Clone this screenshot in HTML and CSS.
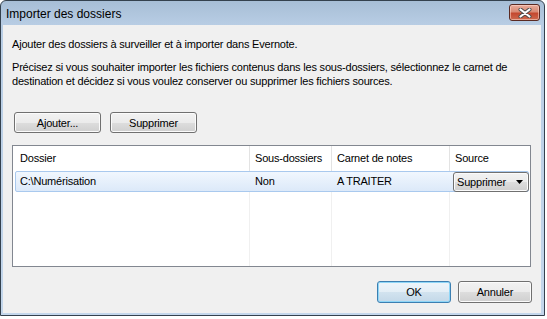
FILE: index.html
```html
<!DOCTYPE html>
<html lang="fr">
<head>
<meta charset="utf-8">
<title>Importer des dossiers</title>
<link rel="stylesheet" href="styles.css">
</head>
<body>
<div class="window">
  <div class="titlebar">
    <span class="title">Importer des dossiers</span>
    <button class="close" aria-label="Fermer">
      <svg width="14" height="10" viewBox="0 0 14 10">
        <path d="M2.5 1.5 L11.5 8.5 M11.5 1.5 L2.5 8.5" stroke="#4a4a4a" stroke-width="4" stroke-linecap="round" fill="none"/>
        <path d="M2.5 1.5 L11.5 8.5 M11.5 1.5 L2.5 8.5" stroke="#ffffff" stroke-width="2.2" stroke-linecap="round" fill="none"/>
      </svg>
    </button>
  </div>
  <div class="content">
    <p class="intro">Ajouter des dossiers à surveiller et à importer dans Evernote.</p>
    <p class="desc">Précisez si vous souhaiter importer les fichiers contenus dans les sous-dossiers, sélectionnez le carnet de<br>destination et décidez si vous voulez conserver ou supprimer les fichiers sources.</p>
    <div class="actions">
      <button class="btn btn-top">Ajouter...</button>
      <button class="btn btn-top">Supprimer</button>
    </div>
    <div class="list">
      <div class="hcell c1">Dossier</div>
      <div class="hcell c2">Sous-dossiers</div>
      <div class="hcell c3">Carnet de notes</div>
      <div class="hcell c4">Source</div>
      <div class="sel"></div>
      <div class="cell c1">C:\Numérisation</div>
      <div class="cell c2">Non</div>
      <div class="cell c3">A TRAITER</div>
      <div class="cell c4 combo-cell">
        <div class="combo">
          <span>Supprimer</span>
          <svg width="7" height="4" viewBox="0 0 7 4"><path d="M0 0 H7 L3.5 4 Z" fill="#000"/></svg>
        </div>
      </div>
      <div class="fill c1"></div>
      <div class="fill c2"></div>
      <div class="fill c3"></div>
      <div class="fill c4"></div>
    </div>
    <div class="footer">
      <button class="btn btn-foot btn-default">OK</button>
      <button class="btn btn-foot">Annuler</button>
    </div>
  </div>
</div>
</body>
</html>
```
FILE: styles.css
```css
* { box-sizing: border-box; }

body {
  margin: 0;
  background: #ffffff;
  font-family: "Liberation Sans", Arial, sans-serif;
  color: #000;
}

.window {
  width: 545px;
  height: 316px;
  border: 1px solid #34414e;
  border-radius: 6px 6px 0 0;
  background: linear-gradient(to bottom, #a7bed6 0px, #b8cde4 24px, #c3d6eb 100%);
  padding: 0 3px 2px 2px;
  display: flex;
  flex-direction: column;
}

.titlebar {
  height: 24px;
  display: flex;
  justify-content: space-between;
  align-items: flex-start;
  padding-left: 3px;
}

.title {
  font-size: 12px;
  line-height: 15px;
  padding-top: 6px;
  color: #000;
}

.close {
  margin-top: 3px;
  margin-right: 1px;
  width: 31px;
  height: 17px;
  padding: 0;
  border: 1px solid #5a2a22;
  border-radius: 3px;
  background: linear-gradient(to bottom, #e9ab9b 0%, #d88a74 45%, #c4482f 55%, #cd6a4f 100%);
  box-shadow: inset 0 0 0 1px rgba(255, 220, 210, 0.55);
  display: flex;
  align-items: center;
  justify-content: center;
}

.content {
  flex: 1;
  background: #f0f0f0;
  padding: 12px 0 0 9px;
  font-size: 11px;
  letter-spacing: -0.2px;
}

.intro, .desc {
  margin: 0;
  line-height: 14px;
}

.desc {
  margin-top: 9px;
}

.actions {
  margin-top: 24px;
  margin-left: 2px;
  display: flex;
  gap: 9px;
}

.btn {
  font-family: "Liberation Sans", Arial, sans-serif;
  font-size: 11px;
  letter-spacing: -0.2px;
  color: #000;
  height: 21px;
  padding: 0;
  border: 1px solid #707070;
  border-radius: 3px;
  background: linear-gradient(to bottom, #f2f2f2 0%, #ebebeb 50%, #dddddd 51%, #cfcfcf 100%);
  box-shadow: inset 0 0 0 1px #fbfbfb;
}

.btn-top { width: 87px; }

.list {
  margin-top: 12px;
  width: 519px;
  height: 122px;
  border: 1px solid #828790;
  background: #fff;
  display: grid;
  grid-template-columns: 237px 82px 118px 1fr;
  grid-template-rows: 25px 21px 1fr;
}

.c1 { grid-column: 1; }
.c2 { grid-column: 2; }
.c3 { grid-column: 3; }
.c4 { grid-column: 4; }

.hcell {
  grid-row: 1;
  border-right: 1px solid #e3e3e3;
  padding-left: 5px;
  line-height: 25px;
}

.hcell.c1, .cell.c1 { padding-left: 7px; }
.hcell.c4, .fill.c4 { border-right: none; }

.sel {
  grid-row: 2;
  grid-column: 1 / -1;
  margin: 0 1px 0 2px;
  border: 1px solid #a9c9ee;
  border-radius: 2px;
  background: linear-gradient(to bottom, #f1f7fe, #dce9f9);
}

.cell {
  grid-row: 2;
  padding-left: 5px;
  line-height: 21px;
  white-space: nowrap;
}

.combo-cell {
  padding-left: 3px;
  padding-top: 1px;
}

.combo {
  width: 76px;
  height: 20px;
  border: 1px solid #707070;
  border-radius: 3px;
  background: linear-gradient(to bottom, #f2f2f2 0%, #ebebeb 50%, #dddddd 51%, #cfcfcf 100%);
  box-shadow: inset 0 0 0 1px #fbfbfb;
  display: flex;
  align-items: center;
  justify-content: space-between;
  padding: 0 5px 0 3px;
  line-height: 18px;
}

.fill {
  grid-row: 3;
  border-right: 1px solid #f0f0f0;
}

.footer {
  margin-top: 14px;
  width: 520px;
  display: flex;
  justify-content: flex-end;
  gap: 7px;
}

.btn-foot { width: 74px; height: 22px; }

.btn-default {
  border-color: #3c7fb1;
  box-shadow: inset 0 0 0 1px #8fd6f7;
  background: linear-gradient(to bottom, #eef5fa 0%, #e3eef6 50%, #d2e3ef 51%, #c3d8e8 100%);
}
```
